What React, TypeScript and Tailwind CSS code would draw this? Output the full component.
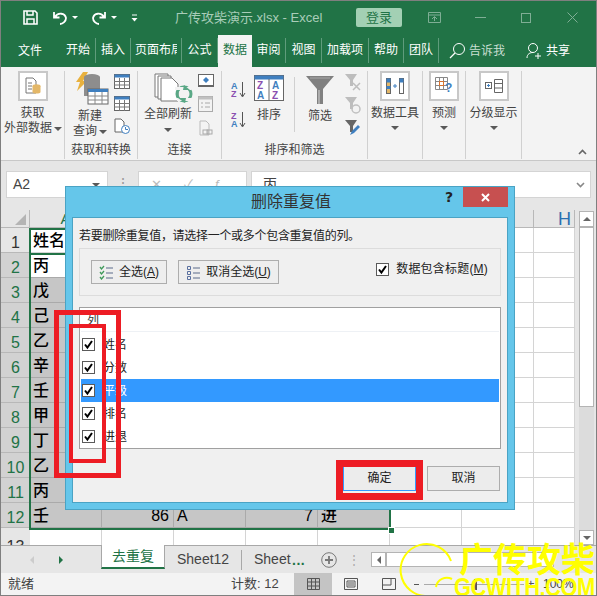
import type { ReactNode } from "react";

const FONT = "font-['Liberation_Sans','Noto_Sans_CJK_SC',sans-serif]";

const TABS = [
  { label: "开始", w: "w-[35px]" },
  { label: "插入", w: "w-[35px]" },
  { label: "页面布局", w: "w-[51px]" },
  { label: "公式", w: "w-[36px]" },
];
const TABS_RIGHT = [
  { label: "审阅", w: "w-[34px]" },
  { label: "视图", w: "w-[36px]" },
  { label: "加载项", w: "w-[47px]" },
  { label: "帮助", w: "w-[35px]" },
  { label: "团队", w: "w-[35px]" },
];
const COLS = [
  { name: "A", w: "w-[72px]" },
  { name: "B", w: "w-[72px]" },
  { name: "C", w: "w-[72px]" },
  { name: "D", w: "w-[72px]" },
  { name: "E", w: "w-[72px]" },
  { name: "F", w: "w-[72px]" },
  { name: "G", w: "w-[72px]" },
  { name: "H", w: "w-[41px]" },
];
const NAMES = ["姓名", "丙", "戊", "己", "乙", "辛", "壬", "甲", "丁", "乙", "丙", "壬"];
const FIELDS = ["姓名", "分数", "平级", "排名", "进退"];

function Arrow({ className = "" }: { className?: string }) {
  return <span className={`inline-block w-0 h-0 border-x-[4px] border-x-transparent border-t-[4px] border-t-[#595959] ${className}`} />;
}

function Check() {
  return (
    <span className="w-[13px] h-[13px] bg-white border border-[#5a5a5a] flex items-center justify-center shrink-0">
      <svg width="11" height="11" viewBox="0 0 11 11">
        <path d="M2 5.5 L4.4 8.5 L9 2" fill="none" stroke="#000" strokeWidth="2" />
      </svg>
    </span>
  );
}

function BoxIcon({ children }: { children: ReactNode }) {
  return <div className="w-[30px] h-[30px] bg-white border-2 border-[#c8c8c8] flex items-center justify-center">{children}</div>;
}

function SmallGrid({ head = "#3f7fbf" }: { head?: string }) {
  return (
    <svg width="16" height="15" viewBox="0 0 16 15">
      <rect x="0.5" y="0.5" width="15" height="14" fill="#fff" stroke="#666" />
      <rect x="0.5" y="0.5" width="15" height="3" fill={head} />
      <path d="M0 7.5H16M0 11H16M5.5 4V15M10.5 4V15" stroke="#777" strokeWidth="1" />
    </svg>
  );
}

function Sep() {
  return <div className="w-px h-[88px] bg-[#d0d0d0] self-start mt-[4px] shrink-0" />;
}

function GroupLabel({ children }: { children: ReactNode }) {
  return <div className="h-[20px] text-center text-[12px] leading-[20px] text-[#444] whitespace-nowrap">{children}</div>;
}

function Ribbon() {
  return (
    <div className="h-[94px] bg-[#f3f3f3] flex border-b border-[#c8c8c8] text-[12px] leading-[15px] text-[#444]">
      {/* 获取外部数据 */}
      <div className="w-[63px] shrink-0 flex flex-col items-center pt-[4px]">
        <BoxIcon>
          <svg width="18" height="18" viewBox="0 0 18 18">
            <path d="M2 1H9L12 4V16H2Z" fill="#fff" stroke="#777" />
            <path d="M4 6H8M4 9H8M4 12H8" stroke="#777" />
            <ellipse cx="12.5" cy="9" rx="4" ry="1.8" fill="#e3b768" />
            <path d="M8.5 9V15C8.5 17 16.5 17 16.5 15V9Z" fill="#e3b768" />
          </svg>
        </BoxIcon>
        <div className="mt-[5px] text-center whitespace-nowrap">获取</div>
        <div className="whitespace-nowrap flex items-center gap-[2px] -mr-[1px]">外部数据<Arrow /></div>
      </div>
      <Sep />
      {/* 获取和转换 */}
      <div className="w-[72px] shrink-0 flex flex-col">
        <div className="flex-1 flex pt-[5px]">
          <div className="w-[48px] flex flex-col items-center">
            <svg width="34" height="33" viewBox="0 0 34 33" className="ml-[6px]">
              <path d="M8 0H13L8 9H12L2 19L5 10H1Z" fill="#e8b13e" />
              <ellipse cx="17" cy="5" rx="8" ry="3" fill="#8d8d8d" />
              <path d="M9 5V24H25V5Z" fill="#8d8d8d" />
              <rect x="13" y="17" width="20" height="15" fill="#fff" stroke="#666" />
              <rect x="13" y="17" width="20" height="3" fill="#3f7fbf" />
              <path d="M13 24H33M13 28H33M20 20V32M27 20V32" stroke="#888" />
            </svg>
            <div className="mt-[4px] whitespace-nowrap ml-[2px]">新建</div>
            <div className="whitespace-nowrap flex items-center gap-[2px] ml-[2px]">查询<Arrow /></div>
          </div>
          <div className="flex flex-col gap-[7px] pl-[1px] pt-[2px]">
            <SmallGrid />
            <SmallGrid />
            <svg width="16" height="16" viewBox="0 0 16 16">
              <path d="M1 1H7L10 4V14H1Z" fill="#fff" stroke="#666" />
              <circle cx="11.5" cy="11.5" r="4" fill="#fff" stroke="#3f7fbf" />
              <path d="M11.5 9V11.5H14" fill="none" stroke="#3f7fbf" />
            </svg>
          </div>
        </div>
        <GroupLabel>获取和转换</GroupLabel>
      </div>
      <Sep />
      {/* 连接 */}
      <div className="w-[83px] shrink-0 flex flex-col">
        <div className="flex-1 flex pt-[6px]">
          <div className="w-[60px] flex flex-col items-center">
            <svg width="42" height="31" viewBox="0 0 42 31" className="ml-[14px]">
              <path d="M1 1H14V24H1Z" fill="#fff" stroke="#777" />
              <path d="M4 3H17V26H4Z" fill="#fff" stroke="#777" />
              <path d="M7 5H18L24 11V28H7Z" fill="#fff" stroke="#777" />
              <circle cx="30" cy="21" r="7" fill="none" stroke="#5aa886" strokeWidth="3" />
              <path d="M21 14H37V17H21ZM23 25H39V28H23Z" fill="#f3f3f3" />
              <path d="M30 12L36 17H29ZM31 30L24 25H32Z" fill="#5aa886" />
            </svg>
            <div className="mt-[3px] whitespace-nowrap text-[12px]">全部刷新</div>
            <Arrow className="mt-[6px]" />
          </div>
          <div className="flex flex-col gap-[8px] pt-[1px]">
            <svg width="16" height="14" viewBox="0 0 16 14">
              <rect x="0.5" y="0.5" width="15" height="11" fill="#fff" stroke="#666" />
              <path d="M8 3L11 6L8 9L5 6Z" fill="#3f7fbf" />
              <path d="M0 12.5H16" stroke="#666" />
            </svg>
            <svg width="15" height="16" viewBox="0 0 15 16">
              <rect x="0.5" y="0.5" width="14" height="15" fill="#f3f3f3" stroke="#aaa" />
              <rect x="0.5" y="0.5" width="14" height="3" fill="#c0c0c0" />
              <path d="M3 7H5M3 11H5M7 7H12M7 11H12" stroke="#aaa" />
            </svg>
            <svg width="15" height="16" viewBox="0 0 15 16">
              <path d="M2 1H8L11 4V15H2Z" fill="#f3f3f3" stroke="#bbb" />
              <rect x="5" y="10" width="5" height="4" fill="none" stroke="#aaa" />
              <rect x="9" y="10" width="5" height="4" fill="none" stroke="#aaa" />
            </svg>
          </div>
        </div>
        <GroupLabel>连接</GroupLabel>
      </div>
      <Sep />
      {/* 排序和筛选 */}
      <div className="w-[145px] shrink-0 flex flex-col">
        <div className="flex-1 flex pt-[9px]">
          <div className="w-[32px] pl-[9px] flex flex-col gap-[13px] pt-[5px]">
            <svg width="15" height="17" viewBox="0 0 15 17">
              <text x="0" y="8" fontSize="9" fill="#3f7fbf" fontWeight="700">A</text>
              <text x="0" y="16" fontSize="9" fill="#8a4fb0" fontWeight="700">Z</text>
              <path d="M11.5 1V15M9 12L11.5 16L14 12" fill="none" stroke="#555" />
            </svg>
            <svg width="15" height="17" viewBox="0 0 15 17">
              <text x="0" y="8" fontSize="9" fill="#8a4fb0" fontWeight="700">Z</text>
              <text x="0" y="16" fontSize="9" fill="#3f7fbf" fontWeight="700">A</text>
              <path d="M11.5 1V15M9 12L11.5 16L14 12" fill="none" stroke="#555" />
            </svg>
          </div>
          <div className="w-[30px] flex flex-col items-center -mt-[1px]">
            <svg width="30" height="26" viewBox="0 0 30 26" className="shrink-0">
              <rect x="0.5" y="0.5" width="29" height="25" fill="#fff" stroke="#666" />
              <rect x="0.5" y="0.5" width="29" height="4" fill="#3f7fbf" />
              <path d="M15 4V26" stroke="#666" />
              <text x="3" y="14" fontSize="10" fill="#8a4fb0" fontWeight="700">Z</text>
              <text x="3" y="24" fontSize="10" fill="#3f7fbf" fontWeight="700">A</text>
              <text x="18" y="14" fontSize="10" fill="#3f7fbf" fontWeight="700">A</text>
              <text x="18" y="24" fontSize="10" fill="#8a4fb0" fontWeight="700">Z</text>
            </svg>
            <div className="mt-[7px]">排序</div>
          </div>
          <div className="w-px h-[55px] bg-[#d0d0d0] mt-[1px] ml-[10px]" />
          <div className="w-[50px] flex flex-col items-center">
            <svg width="28" height="28" viewBox="0 0 28 28" className="shrink-0">
              <path d="M0 0H28L17 13V28H11V13Z" fill="#808080" />
              <path d="M4 2H24" stroke="#a8a8a8" />
              <path d="M13 14V28" stroke="#d8d8d8" />
            </svg>
            <div className="mt-[5px]">筛选</div>
          </div>
          <div className="flex flex-col gap-[6px] -mt-[2px]">
            <svg width="16" height="17" viewBox="0 0 16 17">
              <path d="M0 0H12L8 6V12H5V6Z" fill="#bdbdbd" />
              <path d="M8 9L15 16M15 9L8 16" stroke="#bdbdbd" strokeWidth="1.5" />
            </svg>
            <svg width="16" height="17" viewBox="0 0 16 17">
              <path d="M0 0H12L8 6V12H5V6Z" fill="#bdbdbd" />
              <circle cx="11" cy="12" r="4" fill="none" stroke="#c0c0c0" strokeWidth="1.5" />
            </svg>
            <svg width="16" height="16" viewBox="0 0 16 16">
              <path d="M0 0H12L8 6V12H5V6Z" fill="#666" />
              <path d="M5 15L7 11L13 5L15 7L9 13Z" fill="#3f7fbf" />
            </svg>
          </div>
        </div>
        <GroupLabel>排序和筛选</GroupLabel>
      </div>
      <Sep />
      {/* 数据工具 */}
      <div className="w-[54px] shrink-0 flex flex-col items-center pt-[4px]">
        <BoxIcon>
          <svg width="18" height="16" viewBox="0 0 18 16">
            <rect x="0.5" y="0.5" width="4" height="15" fill="#e3b768" stroke="#666" />
            <rect x="13.5" y="0.5" width="4" height="15" fill="#fff" stroke="#666" />
            <path d="M0.5 0.5h4v4h-4zM13.5 0.5h4v4h-4zM0.5 8h4v3h-4z" fill="#3f7fbf" />
            <path d="M7 8H11M9 6V10" stroke="#3f7fbf" />
          </svg>
        </BoxIcon>
        <div className="mt-[5px] whitespace-nowrap">数据工具</div>
        <Arrow className="mt-[5px]" />
      </div>
      <Sep />
      {/* 预测 */}
      <div className="w-[42px] shrink-0 flex flex-col items-center pt-[4px]">
        <BoxIcon>
          <svg width="18" height="18" viewBox="0 0 18 18">
            <path d="M0.5 0.5H12.5V12.5H0.5ZM0.5 4.5H12.5M0.5 8.5H12.5M4.5 0.5V12.5M8.5 0.5V12.5" fill="#fff" stroke="#888" />
            <rect x="4.5" y="4.5" width="4" height="4" fill="#fff" stroke="#d9722c" />
            <text x="10" y="15" fontSize="12" fontWeight="700" fill="#3f7fbf">?</text>
          </svg>
        </BoxIcon>
        <div className="mt-[5px] whitespace-nowrap">预测</div>
        <Arrow className="mt-[5px]" />
      </div>
      <Sep />
      {/* 分级显示 */}
      <div className="w-[55px] shrink-0 flex flex-col items-center pt-[4px]">
        <BoxIcon>
          <svg width="18" height="14" viewBox="0 0 18 14">
            <rect x="0.5" y="3.5" width="6" height="6" fill="none" stroke="#666" />
            <path d="M2 6.5H5M3.5 5V8" stroke="#3f7fbf" />
            <path d="M9.5 0.5H17.5V13.5H9.5ZM9.5 4.5H17.5M9.5 9H17.5" fill="#fff" stroke="#666" />
          </svg>
        </BoxIcon>
        <div className="mt-[5px] whitespace-nowrap">分级显示</div>
        <Arrow className="mt-[5px]" />
      </div>
      <Sep />
      <div className="flex-1 flex items-end justify-end pr-[9px] pb-[5px]">
        <svg width="9" height="6" viewBox="0 0 9 6"><path d="M1 5L4.5 1.5L8 5" fill="none" stroke="#666" strokeWidth="1.6" /></svg>
      </div>
    </div>
  );
}

function SheetRow({ index, name }: { index: number; name: string }) {
  const selected = index > 1;
  const active = index === 2;
  const last = index === 12;
  return (
    <div className="flex h-[25px]">
      <div className={`w-[29px] shrink-0 flex items-end justify-center text-[16px] leading-[18px] border-b border-[#b8b8b8] ${selected ? "bg-[#d2d2d2] text-[#217346]" : "bg-[#e6e6e6] text-[#333]"}`}>{index}</div>
      {COLS.map((c, i) => {
        const sel = selected && i < 5;
        const bg = active && i === 0 ? "bg-white" : sel ? "bg-[#c6c6c6]" : "bg-white";
        const line = sel ? "border-[#aaaaaa]" : "border-[#d4d4d4]";
        let content: ReactNode = null;
        if (i === 0) content = <span className="pl-[3px]">{name}</span>;
        if (last && i === 1) content = <span className="ml-auto pr-[4px]">86</span>;
        if (last && i === 2) content = <span className="pl-[3px]">A</span>;
        if (last && i === 3) content = <span className="ml-auto pr-[4px]">7</span>;
        if (last && i === 4) content = <span className="pl-[3px]">进</span>;
        return (
          <div key={c.name} className={`${c.w} shrink-0 flex items-center pt-[2px] border-r border-b ${line} ${bg} text-[16px] font-medium text-black`}>
            {content}
          </div>
        );
      })}
    </div>
  );
}

function Sheet() {
  return (
    <div className="h-[335px] flex bg-[#e6e6e6] overflow-hidden">
      <div className="w-[574px] shrink-0">
        <div className="flex h-[18px]">
          <div className="w-[29px] shrink-0 border-r border-b border-[#b8b8b8] flex items-end justify-end pr-[3px] pb-[2px]">
            <div className="w-0 h-0 border-l-[11px] border-l-transparent border-b-[11px] border-b-[#b4b4b4]" />
          </div>
          {COLS.map((c) => (
            <div key={c.name} className={`${c.w} shrink-0 border-r border-b border-[#b8b8b8] text-center text-[15px] leading-[18px] ${c.name === "H" ? "text-[#2a6fb0]" : "text-[#217346]"}`}>
              {c.name === "H" ? <span className="block text-left pl-[24px] text-[18px]">H</span> : c.name}
            </div>
          ))}
        </div>
        {NAMES.map((n, i) => (
          <SheetRow key={i} index={i + 1} name={n} />
        ))}
        <div className="flex h-[17px] overflow-hidden">
          <div className="w-[29px] shrink-0 bg-[#e6e6e6] text-[16px] leading-[22px] text-center text-[#333] pt-[8px]">13</div>
          {COLS.map((c) => (
            <div key={c.name} className={`${c.w} shrink-0 bg-white border-r border-[#d4d4d4]`} />
          ))}
        </div>
      </div>
      <div className="w-[4px]" />
      <div className="w-[15px] shrink-0 flex flex-col mt-[1px]">
        <div className="h-[16px] bg-white border border-[#b4b4b4] flex items-center justify-center">
          <div className="w-0 h-0 border-x-[4px] border-x-transparent border-b-[4px] border-b-[#666]" />
        </div>
        <div className="h-[180px] bg-white border border-[#b4b4b4]" />
        <div className="flex-1 bg-[#dcdcdc]" />
        <div className="h-[15px] bg-white border border-[#b4b4b4] flex items-center justify-center">
          <div className="w-0 h-0 border-x-[4px] border-x-transparent border-t-[4px] border-t-[#666]" />
        </div>
      </div>
    </div>
  );
}

function Dialog() {
  return (
    <div className="absolute left-[64px] top-[185px] w-[450px] h-[324px] bg-[#65c6ea] border border-[#4aa3c4] flex flex-col">
      <div className="h-[30px] flex shrink-0 relative">
        <div className="flex-1 text-center text-[16px] leading-[30px] text-[#333] pl-[2px]">删除重复值</div>
        <div className="absolute left-[379px] top-[1px] text-[14px] font-bold leading-[18px] text-[#222] font-['DejaVu_Sans',sans-serif]">?</div>
        <div className="absolute left-[397px] top-0 w-[45px] h-[20px] bg-[#c75050] flex items-center justify-center">
          <svg width="9" height="9" viewBox="0 0 9 9"><path d="M1 1L8 8M8 1L1 8" stroke="#fff" strokeWidth="2" /></svg>
        </div>
      </div>
      <div className="mx-[6px] flex-1 bg-[#f0f0f0] border border-[#4aa3c4] px-[6px] flex flex-col mb-[6px]">
        <div className="mt-[10px] text-[12px] leading-[16px] text-[#222] whitespace-nowrap tracking-[-0.3px]">若要删除重复值，请选择一个或多个包含重复值的列。</div>
        <div className="mt-[4px] h-[48px] border border-[#dcdcdc] flex items-center pl-[11px] pr-[12px] gap-[11px] shrink-0">
          <div className="w-[76px] h-[24px] border border-[#adadad] bg-[#eeeeee] flex items-center justify-center gap-[5px] text-[12px] text-[#222]">
            <svg width="15" height="15" viewBox="0 0 15 15">
              <path d="M1 2L2.5 4L5 1M1 7L2.5 9L5 6M1 12L2.5 14L5 11" fill="none" stroke="#3f9a5a" strokeWidth="1.3" />
              <path d="M7 3H14M7 8H14M7 13H14" stroke="#5a6a8a" />
            </svg>
            <span>全选(<span className="underline">A</span>)</span>
          </div>
          <div className="w-[101px] h-[24px] border border-[#adadad] bg-[#eeeeee] flex items-center justify-center gap-[5px] text-[12px] text-[#222]">
            <svg width="15" height="15" viewBox="0 0 15 15">
              <path d="M1.5 1.5h3v3h-3zM1.5 6.5h3v3h-3zM1.5 11.5h3v3h-3z" fill="none" stroke="#5a70a0" />
              <path d="M7 3H14M7 8H14M7 13H14" stroke="#5a6a8a" />
            </svg>
            <span>取消全选(<span className="underline">U</span>)</span>
          </div>
          <div className="ml-auto -mt-[6px] flex items-center gap-[7px] text-[12px] text-[#222] whitespace-nowrap">
            <Check />
            <span className="tracking-[0.2px]">数据包含标题(<span className="underline">M</span>)</span>
          </div>
        </div>
        <div className="mt-[11px] h-[142px] border border-[#a0a0a0] bg-white px-[1px] shrink-0">
          <div className="h-[24px] border-b border-[#eef1f5] text-[12px] leading-[24px] pl-[6px] text-[#333]">列</div>
          <div className="pt-[1px]">
            {FIELDS.map((f, i) => (
              <div key={f} className={`h-[23px] flex items-center pl-[1px] gap-[5px] text-[12px] ${i === 2 ? "bg-[#3399ff] text-white" : "text-[#222]"}`}>
                <Check />
                <span className="pl-[3px]">{f}</span>
              </div>
            ))}
          </div>
        </div>
        <div className="mt-[17px] flex justify-end gap-[11px] pr-[1px]">
          <div className="w-[73px] h-[25px] border border-[#3399ff] bg-[#ececec] text-center text-[12px] leading-[23px] text-[#222]">确定</div>
          <div className="w-[73px] h-[25px] border border-[#adadad] bg-[#ececec] text-center text-[12px] leading-[23px] text-[#222]">取消</div>
        </div>
      </div>
    </div>
  );
}

export default function App() {
  return (
    <div className={`relative w-[597px] h-[596px] overflow-hidden bg-[#e6e6e6] border border-[#7f7f7f] ${FONT}`}>
      {/* 标题栏 */}
      <div className="h-[33px] bg-[#217346] flex items-center text-[13px] text-[#a9cdb9] relative">
        <div className="w-[22px]" />
        <svg width="15" height="15" viewBox="0 0 15 15">
          <path d="M1 1H12L14 3V14H1Z" fill="none" stroke="#fff" strokeWidth="1.6" />
          <path d="M4 1V5H10V1M4 14V9H11V14" fill="none" stroke="#fff" strokeWidth="1.5" />
        </svg>
        <svg width="16" height="14" viewBox="0 0 16 14" className="ml-[14px]">
          <path d="M3 6C6 1 13 2 14 7C14 10 11 13 8 13M2 1V6.5H7.5" fill="none" stroke="#fff" strokeWidth="1.8" />
        </svg>
        <span className="ml-[4px] w-0 h-0 border-x-[3px] border-x-transparent border-t-[3px] border-t-white" />
        <svg width="16" height="14" viewBox="0 0 16 14" className="ml-[13px]">
          <path d="M13 6C10 1 3 2 2 7C2 10 5 13 8 13M14 1V6.5H8.5" fill="none" stroke="#fff" strokeWidth="1.8" />
        </svg>
        <span className="ml-[4px] w-0 h-0 border-x-[3px] border-x-transparent border-t-[3px] border-t-white" />
        <svg width="7" height="8" viewBox="0 0 7 8" className="ml-[14px]">
          <path d="M1 1H6" stroke="#fff" />
          <path d="M0.5 4H6.5L3.5 7.5Z" fill="#fff" />
        </svg>
        <span className="ml-[37px] w-[147px] whitespace-nowrap">广传攻柴演示.xlsx - Excel</span>
        <div className="ml-[34px] w-[46px] h-[19px] bg-[#a3d0b4] rounded-[2px] text-center text-[13px] leading-[19px] text-[#217346]">登录</div>
        <svg width="13" height="11" viewBox="0 0 13 11" className="ml-[26px]">
          <path d="M0.5 0.5H12.5V10.5H0.5ZM0.5 3H12.5M4 7L6.5 4.5L9 7M6.5 5V9" fill="none" stroke="#7fae95" />
        </svg>
        <div className="ml-[34px] w-[11px] h-px bg-[#7fae95]" />
        <div className="ml-[35px] w-[10px] h-[10px] border border-[#7fae95]" />
        <svg width="11" height="11" viewBox="0 0 11 11" className="ml-[36px]">
          <path d="M0.5 0.5L10.5 10.5M10.5 0.5L0.5 10.5" stroke="#7fae95" />
        </svg>
      </div>
      {/* 选项卡 */}
      <div className="h-[33px] bg-[#217346] flex items-center text-[12px] text-white">
        <div className="w-[60px] pl-[17px]">文件</div>
        {TABS.map((t) => (
          <div key={t.label} className={`${t.w} shrink-0 h-[25px] text-center leading-[25px] border-r border-[#5f9c7c] overflow-hidden whitespace-nowrap`}>
            {t.label === "页面布局" ? <div className="w-[42px] ml-[4px] overflow-hidden text-left">{t.label}</div> : t.label}
          </div>
        ))}
        <div className="w-[34px] shrink-0 self-end h-[32px] bg-[#f3f3f3] text-[#217346] text-center leading-[30px]">数据</div>
        {TABS_RIGHT.map((t) => (
          <div key={t.label} className={`${t.w} shrink-0 h-[25px] text-center leading-[25px] border-r border-[#5f9c7c] whitespace-nowrap`}>{t.label}</div>
        ))}
        <svg width="17" height="17" viewBox="0 0 17 17" className="ml-[10px]">
          <circle cx="10" cy="7" r="5.5" fill="none" stroke="#fff" />
          <path d="M6 11L1 16" stroke="#fff" strokeWidth="1.3" />
        </svg>
        <span className="ml-[3px] text-[#c9dfd2]">告诉我</span>
        <svg width="17" height="18" viewBox="0 0 17 18" className="ml-[21px]">
          <circle cx="7" cy="6" r="4.5" fill="none" stroke="#fff" />
          <path d="M1 16C1 12 4 10.5 7 10.5M12 11V17M9 14H15" fill="none" stroke="#fff" />
        </svg>
        <span className="ml-[3px]">共享</span>
      </div>
      <Ribbon />
      {/* 编辑栏 */}
      <div className="h-[49px] flex pt-[10px] pl-[5px] text-[14px] text-[#444] bg-[#e6e6e6]">
        <div className="w-[102px] h-[27px] bg-white border border-[#d4d4d4] flex items-center pl-[6px] justify-between pr-[7px]">
          <span>A2</span>
          <Arrow className="border-t-[#777]" />
        </div>
        <div className="w-[30px] text-center text-[#999] leading-[24px]">⋮</div>
        <div className="w-[109px] h-[27px] bg-white border border-[#d4d4d4] flex items-center pl-[12px] gap-[22px] text-[#bbb] text-[13px]">
          <span>✕</span><span>✓</span><span className="italic">f</span>
        </div>
        <div className="ml-[4px] w-[340px] h-[27px] bg-white border border-[#d4d4d4] flex items-center pl-[11px] pr-[5px] justify-between">
          <span>丙</span>
          <svg width="9" height="6" viewBox="0 0 9 6"><path d="M1 1L4.5 4.5L8 1" fill="none" stroke="#888" strokeWidth="1.6" /></svg>
        </div>
      </div>
      <Sheet />
      {/* 工作表标签 */}
      <div className="h-[28px] bg-[#e6e6e6] border-t border-[#a8a8a8] flex items-center text-[14px] text-[#444]">
        <div className="w-[29px]" />
        <div className="w-0 h-0 border-y-[4px] border-y-transparent border-r-[4px] border-r-[#ccc]" />
        <div className="ml-[25px] w-0 h-0 border-y-[4px] border-y-transparent border-l-[4px] border-l-[#217346]" />
        <div className="ml-[38px] w-[64px] h-[24px] self-start bg-white border-x border-[#a8a8a8] border-b-2 border-b-[#217346] text-center leading-[22px] text-[#217346] -mt-px">去重复</div>
        <span className="ml-[12px] w-[64px]">Sheet12</span>
        <div className="w-px h-[20px] bg-[#a8a8a8]" />
        <span className="ml-[12px] w-[37px]">Sheet</span>
        <span className="ml-[1px] text-[#217346] font-bold tracking-[0.5px] leading-[14px]">...</span>
        <svg width="16" height="16" viewBox="0 0 16 16" className="ml-[16px]">
          <circle cx="8" cy="8" r="7.3" fill="none" stroke="#777" />
          <path d="M4 8H12M8 4V12" stroke="#777" strokeWidth="1.8" />
        </svg>
        <span className="ml-[11px] text-[#aaa] leading-[12px] text-[12px]">⋮</span>
        <div className="ml-[11px] w-[15px] h-[15px] bg-white border border-[#b4b4b4] flex items-center justify-center">
          <div className="w-0 h-0 border-y-[4px] border-y-transparent border-r-[4px] border-r-[#666]" />
        </div>
        <div className="w-[168px] h-[15px] bg-white border border-[#b4b4b4]" />
      </div>
      {/* 状态栏 */}
      <div className="h-[22px] flex items-center text-[13px] text-[#444] bg-[#f3f3f3]">
        <span className="ml-[7px] w-[26px]">就绪</span>
        <span className="ml-[197px] w-[63px]">计数: 12</span>
        <div className="w-[38px] h-full bg-[#c4c4c4] flex items-center justify-center shrink-0">
          <svg width="13" height="12" viewBox="0 0 13 12"><path d="M0.5 0.5H12.5V11.5H0.5ZM0.5 4H12.5M0.5 8H12.5M4.5 0.5V11.5M8.5 0.5V11.5" fill="none" stroke="#555" /></svg>
        </div>
        <svg width="14" height="12" viewBox="0 0 14 12" className="ml-[12px]"><path d="M0.5 0.5H13.5V11.5H0.5ZM3 3H11V9H3ZM4 5H10M4 7H10" fill="none" stroke="#555" /></svg>
        <svg width="14" height="12" viewBox="0 0 14 12" className="ml-[24px]"><path d="M0.5 0.5H13.5V11.5H0.5ZM0.5 7H9V0.5" fill="none" stroke="#555" /></svg>
        <div className="ml-[18px] w-[5px] h-px bg-[#555]" />
        <div className="ml-[5px] w-[50px] h-px bg-[#aaa]" />
        <div className="w-[3px] h-[11px] bg-[#555]" />
        <div className="w-[47px] h-px bg-[#aaa]" />
        <span className="ml-[3px] w-[16px] text-[#555]">+</span>
        <span className="text-[12px]">100%</span>
      </div>
      {/* 选区 */}
      <div className="absolute left-[28px] top-[227px] w-[362px] h-[302px] border-2 border-[#217346]" />
      <div className="absolute left-[28px] top-[252px] w-[362px] h-[2px] bg-[#217346]" />
      <div className="absolute left-[387px] top-[526px] w-[5px] h-[5px] bg-[#217346] border border-white box-content" />
      <Dialog />
      {/* 红框标注 */}
      <div className="absolute left-[53px] top-[309px] w-[67px] h-[168px] border-[5px] border-[#ed1c24]" />
      <div className="absolute left-[68px] top-[323px] w-[37px] h-[139px] border-[4px] border-[#ed1c24]" />
      <div className="absolute left-[335px] top-[459px] w-[87px] h-[40px] border-[7px] border-[#ed1c24]" />
      {/* 水印 */}
      <svg width="60" height="60" viewBox="0 0 60 60" className="absolute left-[397px] top-[540px]">
        <path d="M53 20A26 26 0 1 0 30 55" fill="none" stroke="#ffff00" strokeWidth="2" />
        <path d="M54 38A11 11 0 0 0 38 46" fill="none" stroke="#ffff00" strokeWidth="2" />
      </svg>
      <div className="absolute left-[458px] top-[536px] text-[34px] leading-[42px] font-bold text-[#ffff00] whitespace-nowrap font-['Noto_Sans_CJK_SC',sans-serif]">广传攻柴</div>
      <div className="absolute left-[453px] top-[575px] text-[22px] leading-[24px] font-bold text-[#ffff00] whitespace-nowrap tracking-[-0.6px] scale-y-[1.15]">GCWITH.COM</div>
    </div>
  );
}
